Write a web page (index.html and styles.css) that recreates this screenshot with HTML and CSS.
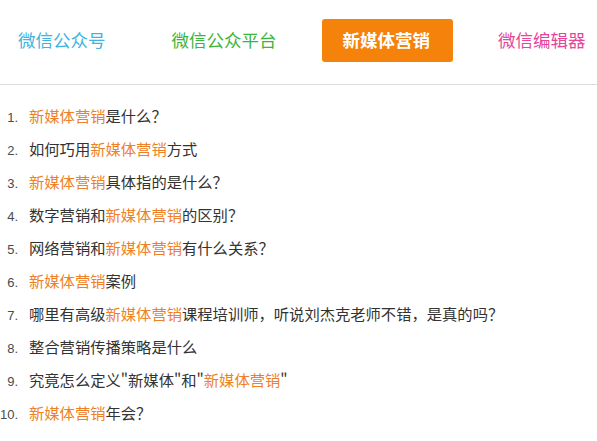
FILE: index.html
```html
<!DOCTYPE html>
<html lang="zh-CN">
<head>
    <meta charset="UTF-8">
    <meta name="viewport" content="width=device-width, initial-scale=1.0">
    <title>新媒体营销</title>
    <link rel="stylesheet" href="styles.css">
</head>
<body>

<nav class="tabs">
    <a class="tab tab-blue" href="#">微信公众号</a>
    <a class="tab tab-green" href="#">微信公众平台</a>
    <a class="tab tab-active" href="#">新媒体营销</a>
    <a class="tab tab-pink" href="#">微信编辑器</a>
</nav>

<ol class="questions">
    <li><span class="num">1.</span><span><em>新媒体营销</em>是什么？</span></li>
    <li><span class="num">2.</span><span>如何巧用<em>新媒体营销</em>方式</span></li>
    <li><span class="num">3.</span><span><em>新媒体营销</em>具体指的是什么？</span></li>
    <li><span class="num">4.</span><span>数字营销和<em>新媒体营销</em>的区别？</span></li>
    <li><span class="num">5.</span><span>网络营销和<em>新媒体营销</em>有什么关系？</span></li>
    <li><span class="num">6.</span><span><em>新媒体营销</em>案例</span></li>
    <li><span class="num">7.</span><span>哪里有高级<em>新媒体营销</em>课程培训师，听说刘杰克老师不错，是真的吗？</span></li>
    <li><span class="num">8.</span><span>整合营销传播策略是什么</span></li>
    <li><span class="num">9.</span><span>究竟怎么定义"新媒体"和"<em>新媒体营销</em>"</span></li>
    <li><span class="num">10.</span><span><em>新媒体营销</em>年会？</span></li>
</ol>

</body>
</html>
```

FILE: styles.css
```css
body {
    margin: 0;
    background-color: #fff;
    color: #333;
    font-family: "Noto Sans CJK SC", "Liberation Sans", sans-serif;
}
.tabs {
    display: flex;
    align-items: center;
    gap: 24px;
    padding: 19px 0 22px 0;
    border-bottom: 1px solid #ddd;
}
.tab {
    box-sizing: border-box;
    display: flex;
    align-items: center;
    height: 43px;
    padding: 0 21px 2px 21px;
    font-size: 17.5px;
    text-decoration: none;
    white-space: nowrap;
}
.tab:first-child {
    padding-left: 18px;
}
.tab-blue {
    color: #42b3de;
}
.tab-green {
    color: #3cb53a;
}
.tab-pink {
    color: #e6459a;
}
.tab-active {
    padding: 0 23px 2px 21px;
    background-color: #f5820b;
    color: #fff;
    font-weight: bold;
    border-radius: 3px;
}
.questions {
    list-style: none;
    margin: 14px 0 0 0;
    padding: 0;
}
.questions li {
    display: flex;
    align-items: baseline;
    height: 33px;
    line-height: 33px;
    font-size: 15.3px;
    white-space: nowrap;
}
.num {
    width: 18px;
    margin-right: 11px;
    text-align: right;
    font-family: "Liberation Sans", sans-serif;
    font-size: 13px;
    color: #4a4a4a;
}
.questions em {
    font-style: normal;
    color: #ee8128;
}
```
